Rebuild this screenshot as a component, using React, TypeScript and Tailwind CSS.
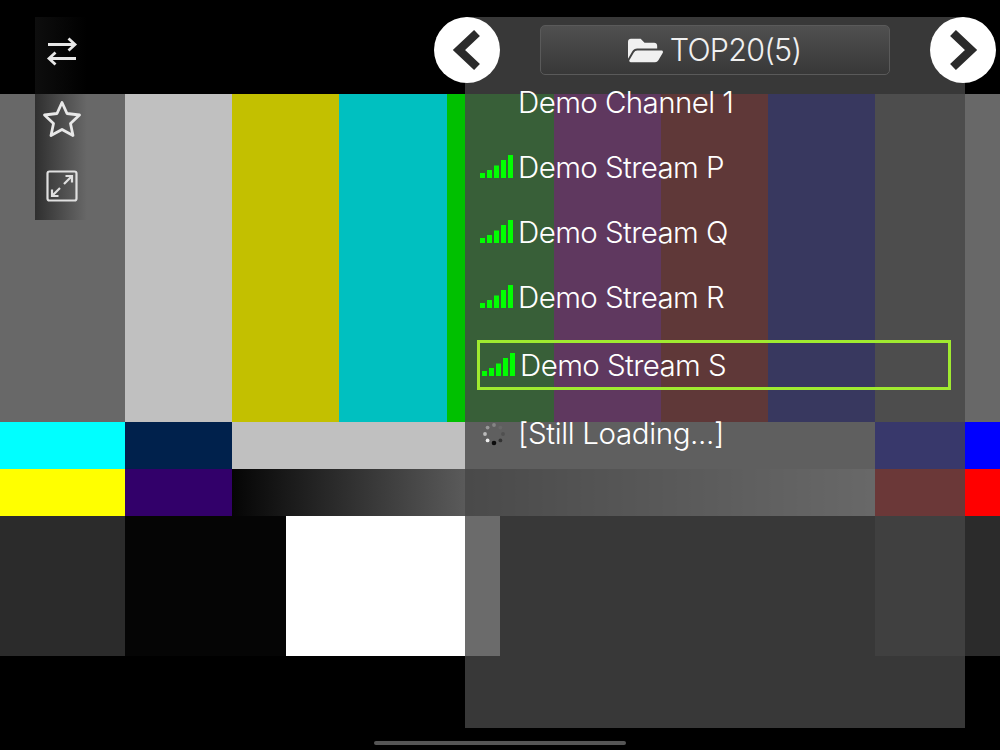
import React from "react";
import { FaFolderOpen } from "react-icons/fa";

function Signal() {
  return (
    <svg width="34" height="24" viewBox="0 0 34 24" className="mt-[-2px] shrink-0" fill="#00ff00">
      <rect x="0" y="19" width="5" height="5" />
      <rect x="7" y="16" width="5" height="8" />
      <rect x="14" y="11.5" width="5" height="12.5" />
      <rect x="21" y="6" width="5" height="18" />
      <rect x="28" y="1" width="5" height="23" />
    </svg>
  );
}

function Spinner() {
  const dots: [number, number, string][] = [
    [12, 21, "#0c0c0c"],
    [18.4, 18.4, "#333333"],
    [21, 12, "#505050"],
    [18.4, 5.6, "#686868"],
    [12, 3, "#858585"],
    [5.6, 5.6, "#999999"],
    [3, 12, "#bbbbbb"],
    [5.6, 18.4, "#eeeeee"],
  ];
  return (
    <svg width="24" height="24" viewBox="0 0 24 24" className="ml-[2px] mt-[1px] shrink-0">
      {dots.map(([x, y, c], i) => (
        <circle key={i} cx={x} cy={y} r={i === 0 ? 2.3 : 1.9} fill={c} />
      ))}
    </svg>
  );
}

function Row({ name, icon, className, textClass }: { name: string; icon?: React.ReactNode; className?: string; textClass?: string }) {
  return (
    <div className={"flex h-[50px] items-center " + (className ?? "")}>
      <div className="flex w-[39px] shrink-0 items-center">{icon}</div>
      <span className={"-ml-[1px] whitespace-nowrap " + (textClass ?? "")}>{name}</span>
    </div>
  );
}

export default function App() {
  return (
    <div className="relative h-[750px] w-[1000px] overflow-hidden bg-black font-['Inter','Liberation_Sans',sans-serif]">
      {/* test pattern */}
      <div className="flex flex-col pt-[94px]">
        <div className="flex h-[328px]">
          <div className="w-[125px] bg-[#686868]" />
          <div className="w-[107px] bg-[#c0c0c0]" />
          <div className="w-[107px] bg-[#c3c000]" />
          <div className="w-[108px] bg-[#00c0c0]" />
          <div className="w-[107px] bg-[#00c000]" />
          <div className="w-[107px] bg-[#c000c0]" />
          <div className="w-[107px] bg-[#c00000]" />
          <div className="w-[107px] bg-[#0000c0]" />
          <div className="w-[125px] bg-[#686868]" />
        </div>
        <div className="flex h-[47px]">
          <div className="w-[125px] bg-[#00ffff]" />
          <div className="w-[107px] bg-[#00214c]" />
          <div className="w-[643px] bg-[#c0c0c0]" />
          <div className="w-[125px] bg-[#0000ff]" />
        </div>
        <div className="flex h-[47px]">
          <div className="w-[125px] bg-[#ffff00]" />
          <div className="w-[107px] bg-[#32006a]" />
          <div className="w-[643px] bg-[linear-gradient(to_right,#050505,#f0f0f0)]" />
          <div className="w-[125px] bg-[#ff0000]" />
        </div>
        <div className="flex h-[140px]">
          <div className="w-[125px] bg-[#2b2b2b]" />
          <div className="w-[161px] bg-[#050505]" />
          <div className="w-[214px] bg-white" />
          <div className="w-[375px] bg-[#010101]" />
          <div className="w-[125px] bg-[#2b2b2b]" />
        </div>
      </div>

      {/* left toolbar */}
      <div className="absolute left-[35px] top-[17px] flex h-[203px] w-[52px] flex-col items-center bg-[linear-gradient(to_right,rgba(20,20,20,0.68),rgba(20,20,20,0))]">
        <svg width="32" height="32" viewBox="0 0 32 32" fill="none" stroke="#e8e8e8" strokeWidth="2.8" className="ml-[1px] mt-[18px] shrink-0">
          <path d="M2 9.5H29M22.5 3.5L29 9.5L22.5 15.5" />
          <path d="M30 23.5H3M9.5 17.5L3 23.5L9.5 29.5" />
        </svg>
        <svg width="40" height="38" viewBox="0 0 40 38" fill="none" stroke="#e8e8e8" strokeWidth="2.8" strokeLinejoin="round" className="ml-[1px] mt-[33px] shrink-0">
          <path d="M20 2.5L25 13.5L37.5 15L28.5 23.5L31 35.5L20 29.5L9 35.5L11.5 23.5L2.5 15L15 13.5Z" />
        </svg>
        <svg width="32" height="32" viewBox="0 0 32 32" fill="none" stroke="#e0e0e0" strokeWidth="2.2" className="ml-[1px] mt-[32px] shrink-0">
          <rect x="1.5" y="1.5" width="29" height="29" rx="2" />
          <path d="M18 14L26 6M19.5 6H26V12.5" />
          <path d="M14 18L6 26M6 19.5V26H12.5" />
        </svg>
      </div>

      {/* channel panel */}
      <div className="absolute left-[465px] top-[17px] flex h-[711px] w-[500px] flex-col bg-[rgba(70,70,70,0.8)] text-[29.5px] font-light tracking-[-0.02em] text-white">
        <div className="ml-[75px] mt-[8px] flex h-[50px] w-[350px] items-center justify-center gap-[7px] rounded-[5px] border border-[#5a5a5a] bg-gradient-to-b from-[#505050] to-[#383838] pr-[1px] text-[30.5px] tracking-[-0.025em] text-[#f0f0f0]">
          <FaFolderOpen className="text-[35px]" />
          <span className="leading-none">TOP20(5)</span>
        </div>
        <div className="flex flex-col pl-[15px] pt-[2px]">
          <Row name="Demo Channel 1" />
          <Row name="Demo Stream P" icon={<Signal />} className="mt-[15px]" />
          <Row name="Demo Stream Q" icon={<Signal />} className="mt-[15px]" />
          <Row name="Demo Stream R" icon={<Signal />} className="mt-[15px]" />
          <div className="-ml-[3px] mt-[18px] flex h-[50px] w-[474px] items-center border-[3px] border-[#a0ea30] pl-[2px]">
            <div className="flex w-[39px] shrink-0 items-center"><Signal /></div>
            <span className="-ml-[1px] whitespace-nowrap">Demo Stream S</span>
          </div>
          <Row name="[Still Loading...]" icon={<Spinner />} className="mt-[18px]" textClass="tracking-[-0.012em]" />
        </div>
      </div>

      {/* prev / next */}
      <div className="absolute left-[434px] top-[17px] flex h-[66px] w-[66px] items-center justify-center rounded-full bg-white">
        <svg width="32" height="42" viewBox="0 0 32 42" fill="none" stroke="#2b2b2b" strokeWidth="8.5">
          <path d="M26 4L8 21L26 38" />
        </svg>
      </div>
      <div className="absolute left-[930px] top-[17px] flex h-[66px] w-[66px] items-center justify-center rounded-full bg-white">
        <svg width="32" height="42" viewBox="0 0 32 42" fill="none" stroke="#2b2b2b" strokeWidth="8.5">
          <path d="M6 4L24 21L6 38" />
        </svg>
      </div>

      {/* home indicator */}
      <div className="absolute bottom-[5px] left-[374px] h-[4px] w-[252px] rounded-full bg-[#555555]" />
    </div>
  );
}
